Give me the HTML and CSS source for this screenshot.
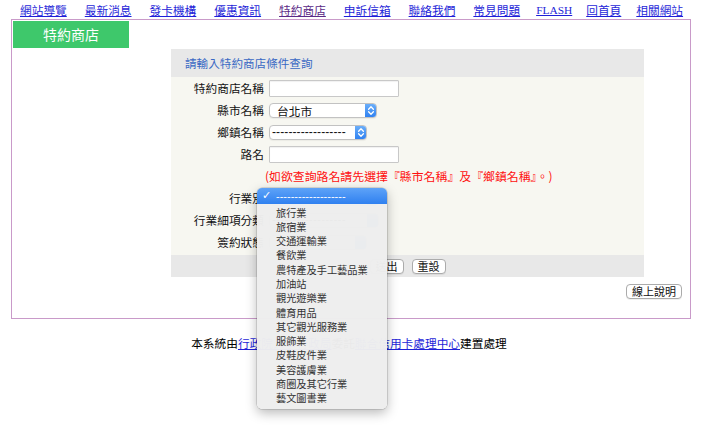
FILE: index.html
```html
<!DOCTYPE html>
<html lang="zh-Hant">
<head>
<meta charset="utf-8">
<title>特約商店</title>
<link rel="stylesheet" href="styles.css">
</head>
<body>
<nav class="topnav">
  <a href="#">網站導覽</a>
  <a href="#">最新消息</a>
  <a href="#">發卡機構</a>
  <a href="#">優惠資訊</a>
  <a href="#" class="visited">特約商店</a>
  <a href="#">申訴信箱</a>
  <a href="#">聯絡我們</a>
  <a href="#">常見問題</a>
  <a href="#" class="latin">FLASH</a>
  <a href="#" class="after-latin">回首頁</a>
  <a href="#" class="last">相關網站</a>
</nav>

<div class="frame">
  <div class="tab">特約商店</div>
  <div class="panel">
    <div class="panel-head">請輸入特約商店條件查詢</div>
    <div class="panel-body">
      <div class="lbl">特約商店名稱</div>
      <div class="fld"><input class="txt" type="text"></div>

      <div class="lbl">縣市名稱</div>
      <div class="fld">
        <div class="sel w108"><span class="val">台北市</span><span class="step"><svg width="12" height="15" viewBox="0 0 12 15"><path d="M3.6 6.2 L6 3.8 L8.4 6.2 M3.6 8.8 L6 11.2 L8.4 8.8" fill="none" stroke="#fff" stroke-width="1.3" stroke-linecap="round" stroke-linejoin="round"/></svg></span></div>
      </div>

      <div class="lbl">鄉鎮名稱</div>
      <div class="fld">
        <div class="sel w98"><span class="val dash">------------------</span><span class="step"><svg width="12" height="15" viewBox="0 0 12 15"><path d="M3.6 6.2 L6 3.8 L8.4 6.2 M3.6 8.8 L6 11.2 L8.4 8.8" fill="none" stroke="#fff" stroke-width="1.3" stroke-linecap="round" stroke-linejoin="round"/></svg></span></div>
      </div>

      <div class="lbl">路名</div>
      <div class="fld"><input class="txt" type="text"></div>

      <div class="note">(如欲查詢路名請先選擇『縣市名稱』及『鄉鎮名稱』。)</div>

      <div class="lbl">行業別</div>
      <div class="fld">
        <div class="sel w110"><span class="val dash">------------------</span><span class="step"></span></div>
      </div>

      <div class="lbl">行業細項分類</div>
      <div class="fld">
        <div class="sel w110"><span class="val dash">------------------</span><span class="step"></span></div>
      </div>

      <div class="lbl">簽約狀態</div>
      <div class="fld">
        <div class="sel w98"><span class="val">全部</span><span class="step"></span></div>
      </div>
    </div>
    <div class="panel-foot">
      <button class="btn" type="button">送出</button>
      <button class="btn" type="button">重設</button>
    </div>
  </div>
  <div class="help-row"><button class="btn" type="button">線上說明</button></div>
</div>

<p class="credit">本系統由<a href="#">行政院人事行政局</a>委託<a href="#">聯合信用卡處理中心</a>建置處理</p>

<div class="popup">
  <div class="hl"><span class="check">✓</span><span class="hl-dash">-------------------</span></div>
  <ul class="items">
    <li>旅行業</li>
    <li>旅宿業</li>
    <li>交通運輸業</li>
    <li>餐飲業</li>
    <li>農特產及手工藝品業</li>
    <li>加油站</li>
    <li>觀光遊樂業</li>
    <li>體育用品</li>
    <li>其它觀光服務業</li>
    <li>服飾業</li>
    <li>皮鞋皮件業</li>
    <li>美容護膚業</li>
    <li>商圈及其它行業</li>
    <li>藝文圖書業</li>
  </ul>
</div>
</body>
</html>
```

FILE: styles.css
```css
* { box-sizing: border-box; }

html, body { min-height: 434px; }

body {
  margin: 0;
  position: relative;
  overflow: visible;
  background: #fff;
  color: #000;
  font-family: "Noto Sans CJK TC", "Noto Sans", sans-serif;
  font-size: 11.7px;
}

/* top navigation */
.topnav {
  display: flex;
  gap: 18px;
  height: 19px;
  padding: 3px 0 2px 20px;
  line-height: 14px;
}
.topnav a { color: #1f1fd8; text-decoration: underline; }
.topnav a.visited { color: #5a2a86; }
.topnav a.latin {
  font-family: "Liberation Serif", serif;
  font-size: 11.4px;
  margin-left: -2px;
}
.topnav a.after-latin { margin-left: -4px; }
.topnav a.last { margin-left: -3px; }

/* main frame */
.frame {
  width: 680px;
  height: 300px;
  margin-left: 11px;
  padding: 1px;
  border: 1px solid #c99ac9;
}

.tab {
  width: 116px;
  height: 27px;
  background: #3ec86b;
  color: #fff;
  font-size: 14px;
  line-height: 27px;
  text-align: center;
}

.panel {
  width: 473px;
  margin: 1px 0 0 158px;
}

.panel-head {
  height: 28px;
  padding-left: 14px;
  background: #e8e8e8;
  color: #3a68c4;
  font-size: 11.6px;
  line-height: 28px;
}

.panel-body {
  display: grid;
  grid-template-columns: 93px 1fr;
  grid-auto-rows: 22px;
  column-gap: 5px;
  align-items: center;
  padding-bottom: 2px;
  background: #f7f7f1;
}

.lbl {
  text-align: right;
  line-height: 14px;
  color: #111;
}

.fld {
  display: flex;
  align-items: center;
}

.txt {
  width: 130px;
  height: 17px;
  margin: 0;
  padding: 0 3px;
  border: 1px solid #c8c8c8;
  border-radius: 1px;
  background: #fff;
  box-shadow: inset 0 1px 1px rgba(0,0,0,0.06);
  font: inherit;
}

.sel {
  display: flex;
  height: 15px;
  border: 1px solid #c2c2c2;
  border-radius: 4px;
  background: #fff;
  overflow: hidden;
  box-shadow: 0 1px 1px rgba(0,0,0,0.05);
}
.sel.w108 { width: 108px; }
.sel.w98 { width: 98px; }
.sel.w110 { width: 110px; }

.sel .val {
  flex: 1;
  padding-left: 7px;
  font-size: 11.7px;
  line-height: 13px;
  color: #111;
}
.sel .val.dash {
  padding-left: 2px;
  font-family: "Liberation Sans", sans-serif;
  font-size: 12px;
  letter-spacing: 0.1px;
}

.sel .step {
  width: 12px;
  margin: -1px -1px -1px 0;
  border-radius: 0 4px 4px 0;
  background: linear-gradient(#6fb2fa, #2c7ef0);
  display: flex;
}

.note {
  grid-column: 2;
  margin-left: -4px;
  color: #ff1010;
  font-size: 11.9px;
  line-height: 14px;
  white-space: nowrap;
}

.panel-foot {
  display: flex;
  justify-content: center;
  align-items: center;
  gap: 8px;
  height: 22px;
  background: #e8e8e8;
}

.btn {
  height: 15px;
  margin: 0;
  padding: 0 5px;
  border: 1px solid #ababab;
  border-radius: 4px;
  background: #fff;
  color: #111;
  font-family: "Noto Sans CJK TC", sans-serif;
  font-size: 11px;
  line-height: 13px;
  box-shadow: 0 1px 0 rgba(0,0,0,0.06);
}

.help-row {
  display: flex;
  justify-content: flex-end;
  margin-top: 7px;
  padding-right: 7px;
}

/* credit line */
.credit {
  width: 680px;
  margin: 17px 0 0 9px;
  text-align: center;
  line-height: 14px;
}
.credit a { color: #1f1fd8; text-decoration: underline; }

/* open select popup (overlay) */
.popup {
  position: absolute;
  z-index: 10;
  left: 257px;
  top: 188px;
  width: 130px;
  height: 221px;
  border-radius: 5px;
  background: rgba(238,238,238,0.98);
  box-shadow: 0 0 0 0.5px rgba(0,0,0,0.22), 0 4px 12px rgba(0,0,0,0.28);
}

.hl {
  display: flex;
  align-items: center;
  height: 16px;
  padding-left: 5px;
  border-radius: 5px 5px 0 0;
  background: linear-gradient(#5ea3f8, #2f80f0);
  color: #fff;
}
.check {
  width: 14px;
  font-family: "DejaVu Sans", sans-serif;
  font-size: 11px;
  font-weight: bold;
  line-height: 12px;
}
.hl-dash {
  font-family: "Liberation Sans", sans-serif;
  font-size: 11px;
  line-height: 12px;
}

.items {
  list-style: none;
  margin: 0;
  padding: 1.5px 0 0 19px;
  font-size: 10.2px;
  line-height: 14.3px;
  color: #333;
}
```
